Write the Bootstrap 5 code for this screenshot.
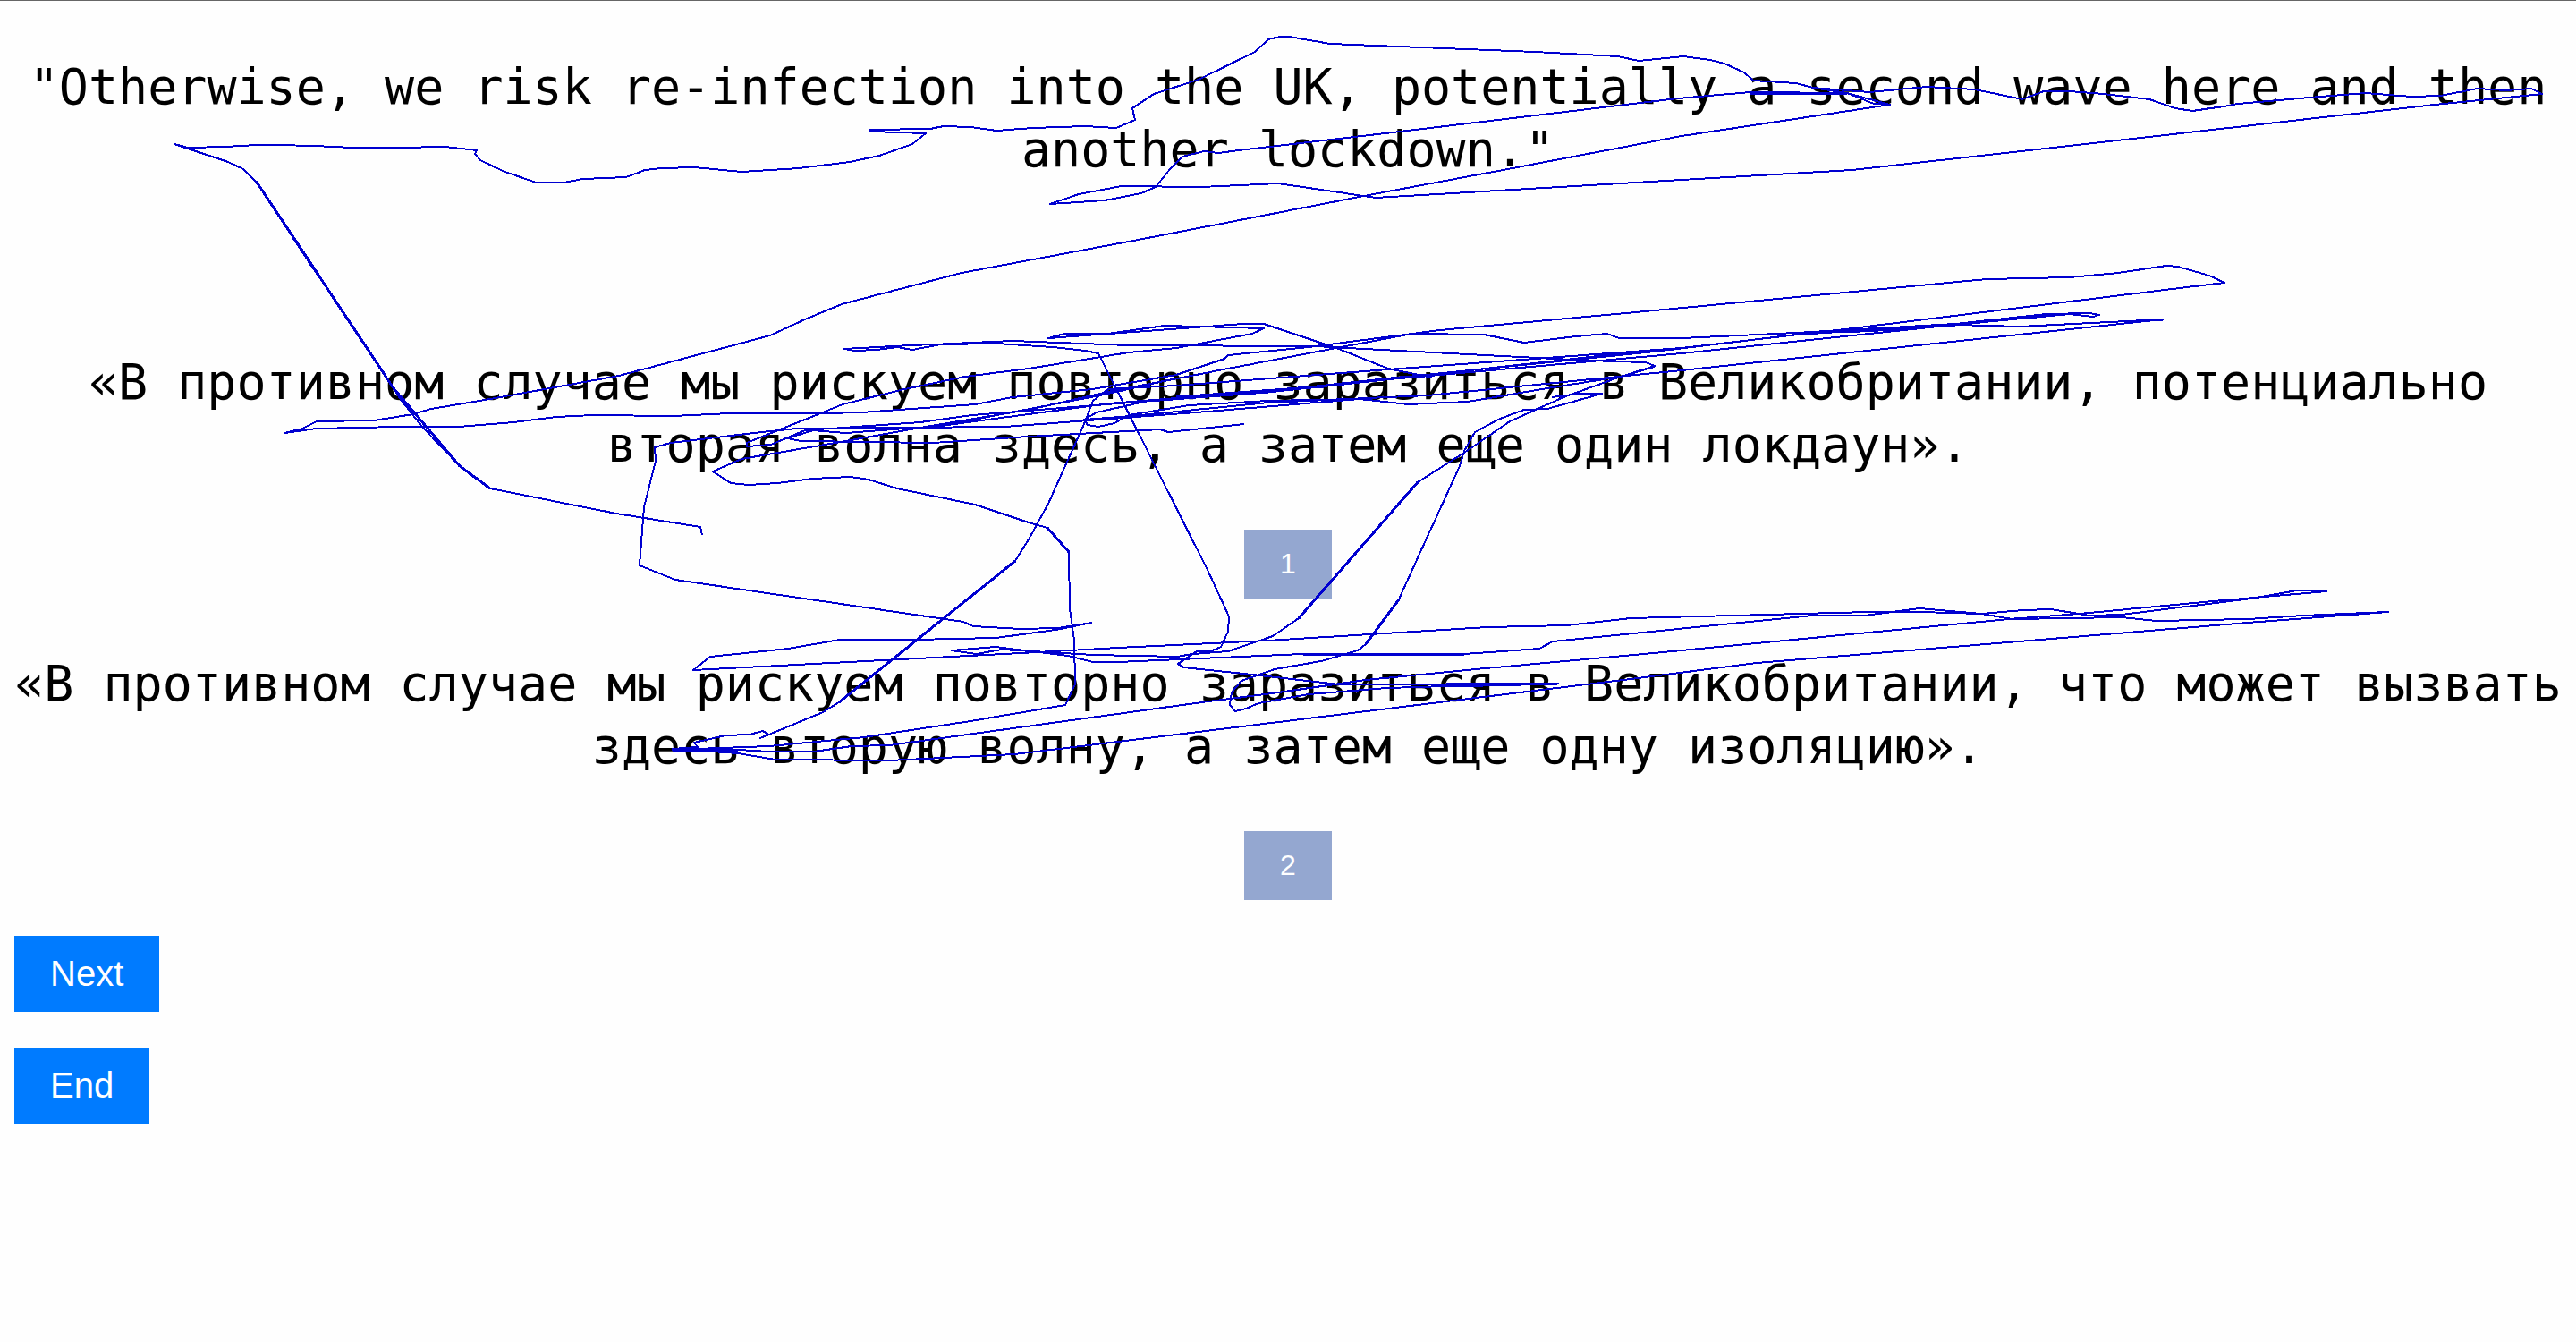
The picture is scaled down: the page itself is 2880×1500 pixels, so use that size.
<!DOCTYPE html>
<html lang="ru">
<head>
<meta charset="utf-8">
<meta name="viewport" content="width=device-width, initial-scale=1">
<title>Translation comparison</title>
<link href="https://cdn.jsdelivr.net/npm/bootstrap@5.3.0/dist/css/bootstrap.min.css" rel="stylesheet">
<script src="https://cdn.jsdelivr.net/npm/bootstrap@5.3.0/dist/js/bootstrap.bundle.min.js"></script>
<style>
body{background:#fefefe;color:#000;border-top:1px solid #666;font-family:"Liberation Sans",Arial,sans-serif}
.compare{padding:61px 16px 0}
.phrase{font-family:"DejaVu Sans Mono",monospace;font-size:55px;line-height:70px}
.source-text{margin-bottom:190px}
.option{margin-bottom:60px}
.option:last-of-type{margin-bottom:40px}
.option .phrase{margin-bottom:60px}
.btn{--bs-btn-color:#fff;--bs-btn-hover-color:#fff;--bs-btn-border-width:0;--bs-btn-border-radius:0;--bs-btn-padding-x:40px;--bs-btn-padding-y:20px}
.btn-pick{--bs-btn-bg:#94a7d0;--bs-btn-hover-bg:#7f95c4;--bs-btn-font-size:32px;line-height:37px}
.btn-step{--bs-btn-bg:#007bff;--bs-btn-hover-bg:#0069d9;--bs-btn-font-size:40px;line-height:45px}
.steps{gap:40px}
.trail{pointer-events:none;fill:none;stroke:#0000d0;stroke-width:2;stroke-linejoin:round;shape-rendering:crispEdges}
</style>
</head>
<body class="position-relative">
<main class="compare text-center">
  <p class="phrase source-text">"Otherwise, we risk re-infection into the UK, potentially a second wave here and then another lockdown."</p>
  <section class="option">
    <p class="phrase">«В противном случае мы рискуем повторно заразиться в Великобритании, потенциально вторая волна здесь, а затем еще один локдаун».</p>
    <button type="button" class="btn btn-pick d-block mx-auto">1</button>
  </section>
  <section class="option">
    <p class="phrase">«В противном случае мы рискуем повторно заразиться в Великобритании, что может вызвать здесь вторую волну, а затем еще одну изоляцию».</p>
    <button type="button" class="btn btn-pick d-block mx-auto">2</button>
  </section>
  <div class="steps d-flex flex-column align-items-start">
    <button type="button" class="btn btn-step">Next</button>
    <button type="button" class="btn btn-step">End</button>
  </div>
</main>
<!-- recorded gaze trail over the sentences -->
<svg class="trail position-absolute top-0 start-0 w-100" viewBox="0 0 2880 1499" aria-hidden="true">
<path d="M785 597L783 588 689 573 548 545 514 520 472 476 446 443 440 433 389 355 348 296 312 241 290 207 286 202 272 188 255 180 210 165 195 160 210 164 252 163 287 161 309 161 351 162 395 164 446 164 497 163 533 167 531 171 537 178 562 190 599 203 630 203 652 199 700 197 721 189 740 187 777 186 829 191 893 187 950 180 983 173 1020 160 1035 148 973 146 973 144 1040 143 1055 140 1085 141 1114 145 1155 142 1213 140 1248 142 1269 133 1266 120 1290 104 1340 88 1403 57 1418 43 1431 40 1441 40 1487 48 1716 57 1809 62 1832 67 1882 62 1912 66 1928 70 1950 80 1960 89 2008 92 2027 97 2090 102 2154 96 2208 99 2261 110 2285 101 2314 101 2352 104 2403 110 2432 120 2451 123 2486 118 2502 115 2582 108 2645 103 2696 107 2728 106 2770 98 2802 100 2830 98 2842 104 2722 116 2518 139 2269 167 2071 189 1880 200 1538 220 1429 204 1343 208 1254 207 1206 216 1174 227 1235 223 1276 215 1292 208 1308 188 1322 174 1346 168 1362 170 1385 167 1557 147 1876 109 1957 102 2065 103 2113 116 1880 151 1691 187 1525 218 1283 265 1075 304 941 339 900 356 861 374 692 419 631 430 548 445 482 456 462 462 418 469 354 470 338 478 318 483 354 478 446 476 513 476 574 471 622 465 663 463 753 464 816 461 925 461 963 460 1090 451 1132 443 1221 434 1315 418 1369 400 1373 396 1463 387 1579 372 1659 373 1704 382 1762 375 1797 372 1810 377 1880 377 2008 371 2186 361 2288 350 2336 349 2347 351 2340 353 2314 350 2186 362 2008 373 1850 392 1574 420 1418 437 1284 447 1226 460 1212 468 1216 474 1228 476 1246 472 1262 463 1329 452 1418 447 1520 445 1574 451 1641 448 1730 433 1812 420 1850 409"/>
<path d="M2027 97L2065 103 2095 115 2113 116M1958 104H2065"/>
<path d="M1520 445L1350 459 1123 476 891 478 851 482 750 494 732 499 733 514 720 566 715 631 755 647 1077 694 1088 699 1141 702 1183 701 1220 695 1180 703 1113 712 1022 714 939 714 881 724 794 733 775 748 1141 729 1250 723 1417 715 1663 700 1752 698 1823 690 2089 683 2146 683 2215 685 2262 681 2293 680 2336 687 2372 686 2517 668 2568 659 2601 660 2474 671 2325 685 2246 691 1838 730 1650 747 1527 759 1422 774 1351 783 994 832 952 833 910 839 860 839 825 837 752 837 860 833 966 823 1085 805 1191 787 1202 764 1201 714 1196 679 1195 616 1171 589 1150 583 1090 563 1003 545 971 535 951 532 909 534 869 539 837 541 817 539 797 526 829 512 940 493 1029 477 1150 457 1239 437 1373 411 1494 388 1579 372 1610 368 1850 346 2221 311 2314 309 2368 304 2422 296 2435 297 2470 307 2487 315 2412 324 2071 366 1880 388 1552 412 1315 430 1239 434 1222 447 1212 473 1172 562 1150 602 1135 626 938 784 920 795 850 824 859 820 853 816 838 820 811 821 776 829 780 834 752 836 825 841 867 848 994 849 1134 842 1250 828 1650 779 1823 758 1964 740 2513 695 2670 683 2575 687 2513 691 2411 693 2372 689 2250 691 2215 685 2146 679 2085 687 2026 687 1736 716 1721 724 1637 730 1457 730 1250 739 1222 739 1194 732 1113 722 1064 726 1091 730 1120 725 1222 731 1316 733 1333 730 1373 727 1423 710 1452 690 1496 640 1585 538 1637 505 1688 470 1748 443 1812 420 1850 408 1840 404 1775 402 1699 398 1525 389 1471 386 1262 385 1132 380 1065 383 998 386 944 389 956 391 980 390 1003 387 1020 390 1052 384 1114 383 1177 387 1213 391 1228 394 1351 638 1374 688 1373 705 1365 722 1353 727 1338 727 1317 741 1323 745 1400 753 1497 764 1742 763 1617 766 1550 768 1463 775 1407 785 1393 791 1381 794 1375 787 1377 773 1388 760 1425 747 1477 738 1518 726 1527 719 1564 669 1577 640 1632 520 1637 503 1649 482 1677 467 1704 457 1730 456 1791 439 1766 439 1735 443"/>
<path d="M1391 473L1306 482 1297 479 1150 487 1043 494 896 492 880 489 909 480 945 483 1052 475 1230 441 1315 422M1601 421L1552 411 1494 388 1413 361 1390 361 1172 377 1190 372 1239 372 1302 363 1413 366 1400 372 1315 388 1262 393 1150 411 1079 420 1007 435 942 451 835 494 835 498 862 496 900 480 1029 471 1087 463 1350 442 1520 426 1880 394 2186 362 2259 364 2418 356 1880 413 1596 441 1418 449 1265 464 1212 468M1052 475L1240 450 1480 431 1850 390"/>
<!-- segments the gaze passed over more than once -->
<path stroke-width="3" d="M1284 447L1418 437 1574 420M1315 443L1480 431M2186 362L2120 367 2060 370M2186 362L2288 351M1617 766L1742 763M752 837H825M2395 356H2418M1452 690L1585 538M1135 626L938 784M286 202L290 207 440 433 514 520 548 545M1457 730H1637M1527 719L1564 669M1171 589L1195 616M1957 103H2065"/>
</svg>
</body>
</html>
